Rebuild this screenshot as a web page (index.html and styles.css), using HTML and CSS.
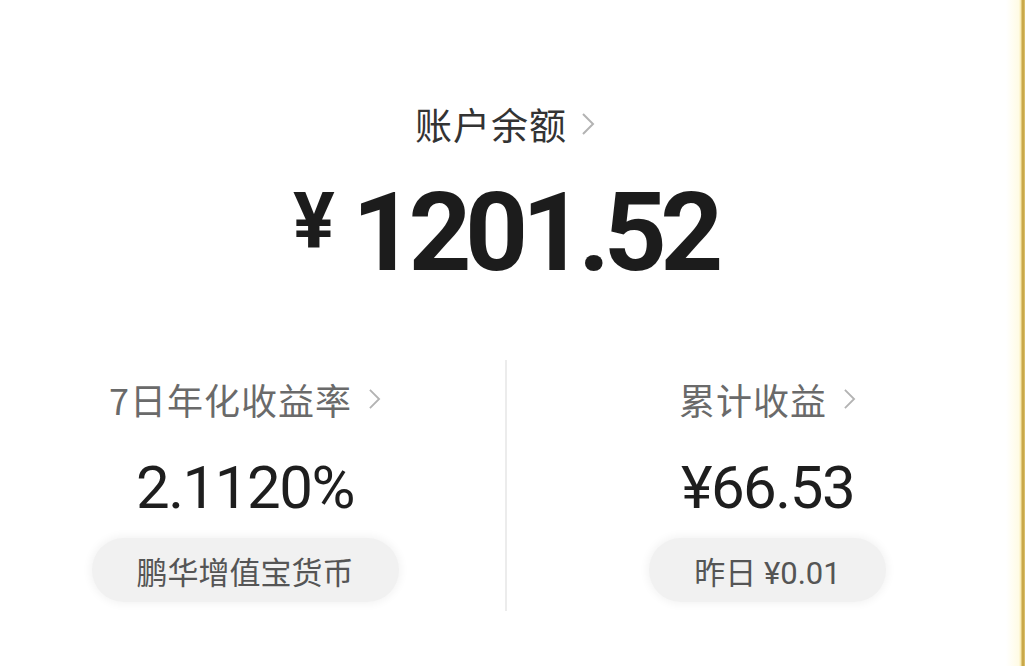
FILE: index.html
```html
<!DOCTYPE html>
<html lang="zh-CN">
<head>
<meta charset="utf-8">
<title>账户余额</title>
<link rel="stylesheet" href="styles.css">
</head>
<body>
<main class="page">
  <section class="hero">
    <div class="label label-lg">账户余额<svg class="chev" viewBox="0 0 14 24" width="14" height="24"><path d="M2 2 L12 12 L2 22" fill="none" stroke="#b3b3b3" stroke-width="2"/></svg></div>
    <div class="amount"><span class="cur">¥</span><span class="num">1201.52</span></div>
  </section>
  <section class="stats">
    <div class="stat stat-left">
      <div class="label label-md">7日年化收益率<svg class="chev" viewBox="0 0 14 24" width="13" height="22"><path d="M2 2 L12 12 L2 22" fill="none" stroke="#b3b3b3" stroke-width="2"/></svg></div>
      <div class="value">2.1120%</div>
      <div class="pill">鹏华增值宝货币</div>
    </div>
    <div class="stat stat-right">
      <div class="label label-md">累计收益<svg class="chev" viewBox="0 0 14 24" width="13" height="22"><path d="M2 2 L12 12 L2 22" fill="none" stroke="#b3b3b3" stroke-width="2"/></svg></div>
      <div class="value">¥66.53</div>
      <div class="pill">昨日 ¥0.01</div>
    </div>
  </section>
</main>
</body>
</html>
```
FILE: styles.css
```css
html, body {
  margin: 0;
  padding: 0;
}
body {
  width: 1025px;
  height: 666px;
  overflow: hidden;
  font-family: "Noto Sans CJK SC", "Noto Sans", sans-serif;
  background: linear-gradient(to right, #ffffff 0, #ffffff 1006px, #fffbe4 1019px, #f6e6a8 1021px, #c9a84a 1022px, #c9a84a 1024px, #e8d48a 1025px);
}
.page {
  width: 1010px;
  display: flex;
  flex-direction: column;
}
.hero {
  display: flex;
  flex-direction: column;
  align-items: center;
  padding-top: 101px;
}
.label {
  display: flex;
  align-items: center;
  color: #333333;
  white-space: nowrap;
}
.label-lg {
  font-size: 37px;
  line-height: 46px;
  letter-spacing: 1px;
}
.label-lg .chev {
  margin-left: 14px;
}
.label-md {
  font-size: 36px;
  line-height: 44px;
  color: #6a6a6a;
  letter-spacing: 1px;
}
.label-md .chev {
  margin-left: 16px;
}
.amount {
  display: flex;
  align-items: flex-start;
  margin-top: 36px;
  color: #1c1c1c;
  font-family: Roboto, "Liberation Sans", sans-serif;
  font-weight: 700;
}
.cur {
  font-size: 78px;
  line-height: 78px;
  margin-top: 0px;
  margin-right: 17px;
}
.num {
  font-size: 110px;
  line-height: 100px;
  letter-spacing: -6.5px;
}
.stats {
  display: grid;
  grid-template-columns: 505px 505px;
  margin-top: 77px;
}
.stat {
  display: flex;
  flex-direction: column;
  align-items: center;
  padding-top: 17px;
  height: 251px;
  box-sizing: border-box;
}
.stat-left {
  padding-right: 15px;
}
.stat-right {
  border-left: 2px solid #ececec;
  padding-left: 18px;
}
.value {
  margin-top: 35px;
  font-family: Roboto, "Liberation Sans", sans-serif;
  font-size: 60px;
  line-height: 64px;
  color: #1e1e1e;
  letter-spacing: -1.5px;
}
.pill {
  margin-top: 18px;
  height: 64px;
  padding: 0 45px;
  border-radius: 32px;
  background: #f1f1f1;
  box-shadow: 0 0 8px 2px #f3f3f3;
  display: flex;
  align-items: center;
  font-size: 31px;
  color: #555555;
  white-space: nowrap;
  font-family: Roboto, "Noto Sans CJK SC", sans-serif;
}
```
